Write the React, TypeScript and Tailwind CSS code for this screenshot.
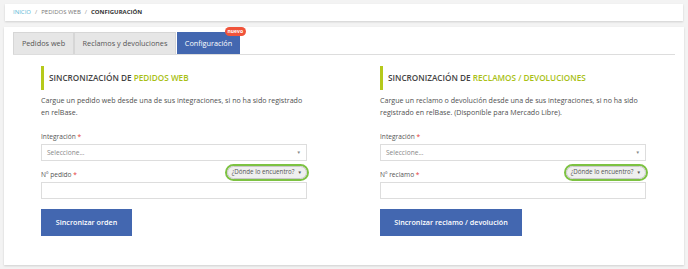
const font = { fontFamily: '"Open Sans", "Liberation Sans", sans-serif' };

function SyncColumn({
  title,
  highlight,
  description,
  numberLabel,
  buttonLabel,
  buttonWidth,
  offset,
}: {
  title: string;
  highlight: string;
  description: string;
  numberLabel: string;
  buttonLabel: string;
  buttonWidth: string;
  offset: string;
}) {
  return (
    <div className={`w-[266px] ${offset}`}>
      {/* titulo con barra */}
      <div className="mt-[11px] h-[24px] border-l-[3px] border-[#b5c91b] pl-[5px] flex items-center">
        <h3 className="text-[8.2px] font-semibold text-[#444] uppercase">
          {title} <span className="text-[#a8bf15]">{highlight}</span>
        </h3>
      </div>
      <p className="mt-[4px] text-[7.1px] leading-[12px] text-[#505050] h-[24px]">{description}</p>

      <label className="block mt-[14px] text-[6.6px] text-[#555] leading-[10px]">
        Integración <span className="text-[#e53935]">*</span>
      </label>
      <div className="mt-[2px] h-[17px] border border-[#ddd] bg-white flex items-center justify-between px-[5px]">
        <span className="text-[6.6px] text-[#888]">Seleccione...</span>
        <span className="text-[4.5px] text-[#888]">▼</span>
      </div>

      <div className="relative mt-[3px] h-[18px] flex items-end pb-[2px]">
        <label className="text-[6.6px] text-[#555] leading-[10px]">
          {numberLabel} <span className="text-[#e53935]">*</span>
        </label>
        <div className="absolute right-[-2px] top-0 rounded-full border-2 border-[#7dc242]">
          <div className="flex items-center gap-[3px] rounded-full bg-[#efefef] border border-[#c8c8c8] px-[4px] h-[13px]">
            <span className="text-[6.2px] text-[#555] leading-none">¿Dónde lo encuentro?</span>
            <span className="text-[4.5px] text-[#555]">▼</span>
          </div>
        </div>
      </div>
      <div className="h-[17px] border border-[#ddd] bg-white" />

      <button
        className={`mt-[10px] h-[27px] ${buttonWidth} bg-[#4367b0] text-white text-[7.2px] font-semibold flex items-center justify-center`}
      >
        {buttonLabel}
      </button>
    </div>
  );
}

export default function App() {
  return (
    <div className="w-[688px] h-[269px] bg-[#f3f3f3] pt-[4px] px-[4px]" style={font}>
      {/* breadcrumb */}
      <div className="ml-[1px] mr-[1px] h-[17px] bg-white shadow-[0_1px_2px_rgba(0,0,0,0.15)] flex items-center pl-[8px] gap-[4px] text-[6px] uppercase">
        <span className="text-[#5bb8d6]">Inicio</span>
        <span className="text-[#999]">/</span>
        <span className="text-[#777]">Pedidos web</span>
        <span className="text-[#999]">/</span>
        <span className="text-[#333] font-bold">Configuración</span>
      </div>

      {/* tarjeta principal */}
      <div className="mt-[6px] h-[238px] bg-white shadow-[0_1px_2px_rgba(0,0,0,0.15)] px-[9px] pt-[6px]">
        <div className="flex items-end h-[22px] border-b border-[#ddd]">
          <div className="h-[22px] w-[61px] bg-[#e6e6e6] border border-[#d6d6d6] border-b-0 flex items-center justify-center text-[7.3px] text-[#555]">
            Pedidos web
          </div>
          <div className="h-[22px] w-[102px] bg-[#e6e6e6] border border-[#d6d6d6] border-b-0 flex items-center justify-center text-[7.3px] text-[#555]">
            Reclamos y devoluciones
          </div>
          <div className="relative ml-[1px] h-[22px] w-[63px] bg-[#4367b0] flex items-center justify-center text-[7.3px] text-white">
            Configuración
            <span className="absolute right-[-6px] top-[-5px] h-[9px] px-[3px] rounded-full bg-[#f0533a] text-white text-[5px] font-bold leading-[9px]">
              nuevo
            </span>
          </div>
        </div>

        <div className="flex">
          <div className="w-[331px]">
            <SyncColumn
              offset="ml-[28px]"
              title="Sincronización de"
              highlight="Pedidos web"
              description="Cargue un pedido web desde una de sus integraciones, si no ha sido registrado en relBase."
              numberLabel="Nº pedido"
              buttonLabel="Sincronizar orden"
              buttonWidth="w-[91px]"
            />
          </div>
          <div className="w-[331px]">
            <SyncColumn
              offset="ml-[36px]"
              title="Sincronización de"
              highlight="Reclamos / devoluciones"
              description="Cargue un reclamo o devolución desde una de sus integraciones, si no ha sido registrado en relBase. (Disponible para Mercado Libre)."
              numberLabel="Nº reclamo"
              buttonLabel="Sincronizar reclamo / devolución"
              buttonWidth="w-[142px]"
            />
          </div>
        </div>
      </div>
    </div>
  );
}
